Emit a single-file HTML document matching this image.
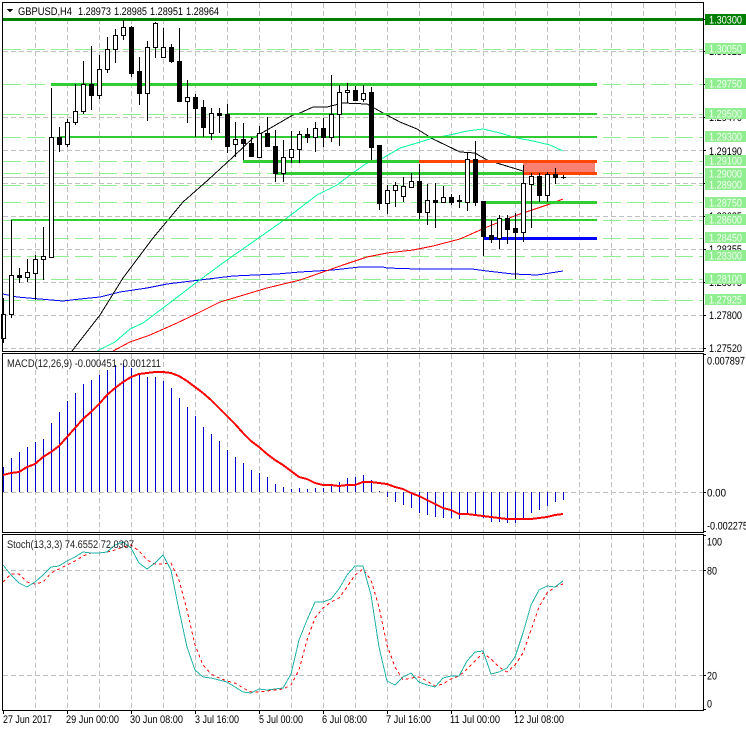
<!DOCTYPE html>
<html><head><meta charset="utf-8"><title>GBPUSD,H4</title>
<style>html,body{margin:0;padding:0;background:#fff;width:746px;height:731px;overflow:hidden}svg{display:block}text{font-family:"Liberation Sans",sans-serif;font-size:11px;fill:#000}</style></head>
<body>
<svg width="746" height="731" viewBox="0 0 746 731" xmlns="http://www.w3.org/2000/svg" shape-rendering="crispEdges">
<rect width="746" height="731" fill="#fff"/>
<!-- grid -->
<g stroke="#c0c0c0" stroke-width="1" stroke-dasharray="5 3" fill="none">
<path d="M35.5 3V351M67.5 3V351M99.5 3V351M131.5 3V351M163.5 3V351M195.5 3V351M227.5 3V351M259.5 3V351M291.5 3V351M323.5 3V351M355.5 3V351M387.5 3V351M419.5 3V351M451.5 3V351M483.5 3V351M515.5 3V351M547.5 3V351M579.5 3V351M611.5 3V351M643.5 3V351M675.5 3V351"/>
<path d="M35.5 354V532M67.5 354V532M99.5 354V532M131.5 354V532M163.5 354V532M195.5 354V532M227.5 354V532M259.5 354V532M291.5 354V532M323.5 354V532M355.5 354V532M387.5 354V532M419.5 354V532M451.5 354V532M483.5 354V532M515.5 354V532M547.5 354V532M579.5 354V532M611.5 354V532M643.5 354V532M675.5 354V532"/>
<path d="M35.5 535V710M67.5 535V710M99.5 535V710M131.5 535V710M163.5 535V710M195.5 535V710M227.5 535V710M259.5 535V710M291.5 535V710M323.5 535V710M355.5 535V710M387.5 535V710M419.5 535V710M451.5 535V710M483.5 535V710M515.5 535V710M547.5 535V710M579.5 535V710M611.5 535V710M643.5 535V710M675.5 535V710"/>
<path d="M3 51.5H703M3 117.5H703M3 150.5H703M3 183.5H703M3 216.5H703M3 249.5H703M3 282.5H703M3 315.5H703M3 348.5H703"/>
<path d="M3 492.5H703M3 570.5H703M3 675.5H703"/>
</g>
<!-- bid line -->
<rect x="3" y="177" width="700" height="1" fill="#c0c0c0"/>
<!-- level dashes -->
<path stroke="#90ee90" stroke-width="1" stroke-dasharray="18 6" fill="none" d="M3 49.5H703M3 84.5H703M3 114.5H703M3 137.5H703M3 161.5H703M3 173.5H703M3 185.5H703M3 202.5H703M3 220.5H703M3 238.5H703M3 256.5H703M3 279.5H703M3 300.5H703"/>
<!-- MAs -->
<g fill="none" stroke-width="1">
<polyline stroke="#0000ff" points="3,294 17,297 40,299 63,301 80,299 100,297 120,292 147,288 167,284 200,280 233,276 277,274 300,272 333,270 360,267 383,267 387,268 417,269 472,269 487,271 513,274 537,275 563,271"/>
<polyline stroke="#ff0000" points="113,351 130,342 150,335 177,323 200,312 220,302 237,297 267,288 300,280 323,272 343,265 367,257 387,253 413,250 433,246 460,239 487,227 517,215 550,204 563,199"/>
<polyline stroke="#00fa9a" points="97,351 115,342 130,329 143,323 167,305 197,282 227,260 260,237 287,218 300,208 317,195 337,185 350,175 367,163 383,158 400,148 417,143 433,138 450,135 467,131 483,129 500,133 517,138 533,141 550,145 563,151"/>
<polyline stroke="#000" points="72,351 100,315 123,278 153,238 183,202 208,180 233,157 253,138 267,130 293,115 300,113 313,107 327,107 343,103 367,104 383,113 400,122 417,129 433,139 460,152 475,153 487,160 513,168 523,171 535,172"/>
</g>
<!-- thick levels -->
<rect x="3" y="18" width="700" height="3" fill="#008000"/>
<g fill="#32cd32">
<rect x="51" y="83" width="546" height="3"/>
<rect x="227" y="113" width="370" height="2"/>
<rect x="59" y="136" width="538" height="2"/>
<rect x="243" y="160" width="176" height="3"/>
<rect x="275" y="172" width="248" height="3"/>
<rect x="483" y="201" width="114" height="3"/>
<rect x="11" y="219" width="586" height="2"/>
</g>
<rect x="483" y="237" width="114" height="3" fill="#0000ff"/>
<rect x="523" y="161" width="72" height="12" fill="#fb8072"/>
<rect x="419" y="160" width="178" height="3" fill="#ff4500"/>
<rect x="523" y="172" width="74" height="3" fill="#ff4500"/>
<!-- wicks -->
<path stroke="#000" stroke-width="1" fill="none" d="M3.5 298V343M11.5 220V318M19.5 268V283M27.5 259V282M35.5 255V300M43.5 227V280M51.5 88V258M59.5 127V152M67.5 119V147M75.5 84V125M83.5 61V114M91.5 46V110M99.5 55V99M107.5 37V73M115.5 29V63M123.5 20V40M131.5 26V77M139.5 57V105M147.5 41V121M155.5 22V58M163.5 28V57M171.5 44V63M179.5 28V102M187.5 80V123M195.5 94V137M203.5 100V137M211.5 108V140M219.5 108V133M227.5 104V153M235.5 122V157M243.5 123V160M251.5 137V156M259.5 126V157M267.5 117V147M275.5 130V182M283.5 140V182M291.5 131V163M299.5 131V163M307.5 128V143M315.5 122V152M323.5 118V147M331.5 75V142M339.5 85V146M347.5 83V103M355.5 86V100M363.5 85V102M371.5 87V160M379.5 145V210M387.5 185V214M395.5 182V207M403.5 177V202M411.5 173V187M419.5 164V219M427.5 184V225M435.5 183V228M443.5 186V203M451.5 194V205M459.5 195V208M467.5 152V211M475.5 141V206M483.5 201V256M491.5 220V243M499.5 215V249M507.5 215V244M515.5 213V279M523.5 165V242M531.5 173V228M539.5 173V202M547.5 172V202M555.5 168V184M563.5 175V179"/>
<!-- black bodies -->
<path fill="#000" d="M17 275h5v3h-5zM89 84h5v12h-5zM57 137h5v8h-5zM129 27h5v47h-5zM137 71h5v23h-5zM169 47h5v15h-5zM177 61h5v41h-5zM193 97h5v12h-5zM201 107h5v21h-5zM217 113h5v3h-5zM225 114h5v33h-5zM241 139h5v5h-5zM249 143h5v14h-5zM265 133h5v14h-5zM273 146h5v28h-5zM305 134h5v4h-5zM321 128h5v10h-5zM353 90h5v11h-5zM369 92h5v56h-5zM377 145h5v59h-5zM417 181h5v32h-5zM433 200h5v3h-5zM449 197h5v6h-5zM457 200h5v2h-5zM473 159h5v44h-5zM481 201h5v36h-5zM489 235h5v5h-5zM505 218h5v12h-5zM513 228h5v5h-5zM537 176h5v20h-5zM553 174h5v4h-5zM561 177h5v1h-5z"/>
<!-- white bodies -->
<g fill="#fff" stroke="#000" stroke-width="1">
<rect x="1.5" y="314.5" width="4" height="24"/><rect x="9.5" y="275.5" width="4" height="39"/><rect x="25.5" y="272.5" width="4" height="5"/><rect x="33.5" y="259.5" width="4" height="14"/><rect x="41.5" y="256.5" width="4" height="3"/><rect x="49.5" y="137.5" width="4" height="120"/><rect x="65.5" y="122.5" width="4" height="22"/><rect x="73.5" y="111.5" width="4" height="11"/><rect x="81.5" y="84.5" width="4" height="27"/><rect x="97.5" y="69.5" width="4" height="26"/><rect x="105.5" y="49.5" width="4" height="20"/><rect x="113.5" y="35.5" width="4" height="14"/><rect x="121.5" y="27.5" width="4" height="8"/><rect x="145.5" y="47.5" width="4" height="46"/><rect x="153.5" y="23.5" width="4" height="24"/><rect x="161.5" y="47.5" width="4" height="10"/><rect x="185.5" y="97.5" width="4" height="4"/><rect x="209.5" y="113.5" width="4" height="20"/><rect x="233.5" y="139.5" width="4" height="5"/><rect x="257.5" y="133.5" width="4" height="24"/><rect x="281.5" y="157.5" width="4" height="16"/><rect x="289.5" y="149.5" width="4" height="8"/><rect x="297.5" y="134.5" width="4" height="15"/><rect x="313.5" y="128.5" width="4" height="9"/><rect x="329.5" y="114.5" width="4" height="23"/><rect x="337.5" y="92.5" width="4" height="22"/><rect x="345.5" y="90.5" width="4" height="2"/><rect x="361.5" y="93.5" width="4" height="6"/><rect x="385.5" y="190.5" width="4" height="13"/><rect x="393.5" y="185.5" width="4" height="5"/><rect x="401.5" y="186.5" width="4" height="10"/><rect x="409.5" y="181.5" width="4" height="6"/><rect x="425.5" y="200.5" width="4" height="12"/><rect x="441.5" y="197.5" width="4" height="5"/><rect x="465.5" y="159.5" width="4" height="43"/><rect x="497.5" y="218.5" width="4" height="20"/><rect x="521.5" y="183.5" width="4" height="49"/><rect x="529.5" y="176.5" width="4" height="8"/><rect x="545.5" y="174.5" width="4" height="21"/>
</g>
<!-- MACD histogram -->
<path stroke="#0000cd" stroke-width="1" fill="none" d="M3.5 492V467M11.5 492V458M19.5 492V452M27.5 492V447M35.5 492V442M43.5 492V439M51.5 492V423M59.5 492V412M67.5 492V401M75.5 492V393M83.5 492V384M91.5 492V380M99.5 492V375M107.5 492V370M115.5 492V365M123.5 492V363M131.5 492V368M139.5 492V375M147.5 492V377M155.5 492V377M163.5 492V381M171.5 492V388M179.5 492V398M187.5 492V407M195.5 492V416M203.5 492V427M211.5 492V434M219.5 492V441M227.5 492V450M235.5 492V457M243.5 492V463M251.5 492V470M259.5 492V473M267.5 492V477M275.5 492V484M283.5 492V487M291.5 492V489M299.5 492V488M307.5 492V489M315.5 492V488M323.5 492V488M331.5 492V486M339.5 492V482M347.5 492V478M355.5 492V477M363.5 492V475M371.5 492V480M379.5 492V491M387.5 492V497M395.5 492V502M403.5 492V505M411.5 492V508M419.5 492V513M427.5 492V515M435.5 492V517M443.5 492V518M451.5 492V518M459.5 492V519M467.5 492V515M475.5 492V514M483.5 492V518M491.5 492V522M499.5 492V522M507.5 492V523M515.5 492V523M523.5 492V520M531.5 492V513M539.5 492V510M547.5 492V506M555.5 492V502M563.5 492V500"/>
<polyline fill="none" stroke="#ff0000" stroke-width="2" points="3,475 11,473 19,472 27,467 35,464 43,457 51,452 59,446 67,437 75,428 83,419 91,412 99,404 107,395 115,388 123,382 131,377 139,374 147,373 155,372 163,372 171,373 179,376 187,381 195,387 203,393 211,400 219,408 227,416 235,424 243,433 251,441 259,447 267,454 275,460 283,465 291,471 299,477 307,479 315,483 323,485 331,485 339,486 347,485 355,485 363,482 371,482 379,483 387,484 395,487 403,489 411,493 419,496 427,500 435,504 443,508 451,510 459,514 467,514 475,515 483,516 491,517 499,518 507,519 515,519 523,519 531,519 539,518 547,517 555,515 563,514"/>
<!-- Stoch -->
<polyline fill="none" stroke="#ff0000" stroke-width="1" stroke-dasharray="3 3" points="3,582 11,574 19,574 27,582 35,584 43,582 51,573 59,569 67,565 75,561 83,556 91,553 99,553 107,552 115,550 123,547 131,545 139,551 147,560 155,564 163,564 171,563 179,580 187,610 195,645 203,665 211,674 219,678 227,681 235,683 243,688 251,692 259,692 267,691 275,690 283,689 291,685 299,670 307,640 315,618 323,608 331,602 339,598 347,587 355,575 363,569 371,580 379,607 387,645 395,667 403,680 411,678 419,677 427,681 435,686 443,684 451,679 459,676 467,669 475,661 483,653 491,659 499,667 507,672 515,665 523,653 531,630 539,607 547,593 555,587 563,584"/>
<polyline fill="none" stroke="#20b2aa" stroke-width="1" points="3,565 11,575 19,583 27,587 35,582 43,575 51,567 59,566 67,561 75,557 83,552 91,553 99,553 107,552 115,545 123,542 131,548 139,563 147,569 155,563 163,555 171,570 179,610 187,647 195,670 203,677 211,678 219,680 227,682 235,687 243,692 251,693 259,689 267,690 275,689 283,688 291,674 299,640 307,620 315,602 323,602 331,599 339,589 347,575 355,566 363,566 371,595 379,647 387,681 395,685 403,677 411,673 419,682 427,685 435,687 443,678 451,676 459,676 467,661 475,652 483,651 491,674 499,672 507,668 515,657 523,633 531,605 539,590 547,586 555,587 563,581"/>
<!-- frames -->
<g fill="none" stroke="#000" stroke-width="1">
<rect x="2.5" y="2.5" width="701" height="349"/>
<rect x="2.5" y="353.5" width="701" height="179"/>
<rect x="2.5" y="534.5" width="701" height="176"/>
<path d="M703 19.5h3M703 51.5h3M703 84.5h3M703 117.5h3M703 150.5h3M703 183.5h3M703 216.5h3M703 249.5h3M703 282.5h3M703 315.5h3M703 348.5h3M703 354.5h3M703 492.5h3M703 531.5h3M703 535.5h3M703 570.5h3M703 675.5h3M703 709.5h3M3.5 711v3M67.5 711v3M131.5 711v3M195.5 711v3M259.5 711v3M323.5 711v3M387.5 711v3M451.5 711v3M515.5 711v3"/>
</g>
<!-- title -->
<rect x="3" y="3" width="220" height="14" fill="#fff"/>
<polygon points="7,9 13,9 10,12.5" fill="#000"/>
<g shape-rendering="auto" text-rendering="geometricPrecision">
<text x="18" y="15" textLength="54" lengthAdjust="spacingAndGlyphs">GBPUSD,H4</text>
<text x="78" y="15" textLength="33" lengthAdjust="spacingAndGlyphs">1.28973</text>
<text x="114" y="15" textLength="33" lengthAdjust="spacingAndGlyphs">1.28985</text>
<text x="150" y="15" textLength="33" lengthAdjust="spacingAndGlyphs">1.28951</text>
<text x="186" y="15" textLength="33" lengthAdjust="spacingAndGlyphs">1.28964</text>
<text x="7" y="367" textLength="154" lengthAdjust="spacingAndGlyphs" style="fill:#222">MACD(12,26,9) -0.000451 -0.001211</text>
<text x="7" y="548" textLength="127" lengthAdjust="spacingAndGlyphs" style="fill:#222">Stoch(13,3,3) 74.6552 72.0307</text>
<!-- axis prices -->
<text x="709" y="55" textLength="33" lengthAdjust="spacingAndGlyphs">1.30025</text>
<text x="709" y="121" textLength="33" lengthAdjust="spacingAndGlyphs">1.29470</text>
<text x="709" y="155" textLength="33" lengthAdjust="spacingAndGlyphs">1.29190</text>
<text x="709" y="220" textLength="33" lengthAdjust="spacingAndGlyphs">1.28635</text>
<text x="709" y="253" textLength="33" lengthAdjust="spacingAndGlyphs">1.28355</text>
<text x="709" y="286" textLength="33" lengthAdjust="spacingAndGlyphs">1.28075</text>
<text x="709" y="319" textLength="33" lengthAdjust="spacingAndGlyphs">1.27800</text>
<text x="709" y="352" textLength="33" lengthAdjust="spacingAndGlyphs">1.27520</text>
<text x="707" y="364.500" textLength="38" lengthAdjust="spacingAndGlyphs">0.007897</text>
<text x="707" y="496.500" textLength="19" lengthAdjust="spacingAndGlyphs">0.00</text>
<text x="707" y="529.500" textLength="41" lengthAdjust="spacingAndGlyphs">-0.002275</text>
<text x="707" y="545.500" textLength="15" lengthAdjust="spacingAndGlyphs">100</text>
<text x="707" y="574.500" textLength="10" lengthAdjust="spacingAndGlyphs">80</text>
<text x="707" y="679.500" textLength="10" lengthAdjust="spacingAndGlyphs">20</text>
<text x="707" y="707.500" textLength="5" lengthAdjust="spacingAndGlyphs">0</text>
<!-- labels -->
<g shape-rendering="crispEdges">
<rect x="705" y="14" width="41" height="11" fill="#008000"/>
<g fill="#90ee90"><rect x="705" y="43" width="41" height="11"/><rect x="705" y="78" width="41" height="11"/><rect x="705" y="108" width="41" height="11"/><rect x="705" y="131" width="41" height="11"/><rect x="705" y="155" width="41" height="11"/><rect x="705" y="168" width="41" height="11"/><rect x="705" y="179" width="41" height="11"/><rect x="705" y="197" width="41" height="11"/><rect x="705" y="214" width="41" height="11"/><rect x="705" y="232" width="41" height="11"/><rect x="705" y="250" width="41" height="11"/><rect x="705" y="273" width="41" height="11"/><rect x="705" y="294" width="41" height="11"/></g>
</g>
<g style="fill:#f2fff2">
<text x="709" y="23.500" textLength="33" lengthAdjust="spacingAndGlyphs" style="fill:#fff">1.30300</text>
<text x="709" y="52.500" textLength="33" lengthAdjust="spacingAndGlyphs" style="fill:#f2fff2">1.30050</text>
<text x="709" y="87.500" textLength="33" lengthAdjust="spacingAndGlyphs" style="fill:#f2fff2">1.29750</text>
<text x="709" y="117.500" textLength="33" lengthAdjust="spacingAndGlyphs" style="fill:#f2fff2">1.29500</text>
<text x="709" y="140.500" textLength="33" lengthAdjust="spacingAndGlyphs" style="fill:#f2fff2">1.29300</text>
<text x="709" y="164.500" textLength="33" lengthAdjust="spacingAndGlyphs" style="fill:#f2fff2">1.29100</text>
<text x="709" y="177.500" textLength="33" lengthAdjust="spacingAndGlyphs" style="fill:#f2fff2">1.29000</text>
<text x="709" y="188.500" textLength="33" lengthAdjust="spacingAndGlyphs" style="fill:#f2fff2">1.28900</text>
<text x="709" y="206.500" textLength="33" lengthAdjust="spacingAndGlyphs" style="fill:#f2fff2">1.28750</text>
<text x="709" y="223.500" textLength="33" lengthAdjust="spacingAndGlyphs" style="fill:#f2fff2">1.28600</text>
<text x="709" y="241.500" textLength="33" lengthAdjust="spacingAndGlyphs" style="fill:#f2fff2">1.28450</text>
<text x="709" y="259.500" textLength="33" lengthAdjust="spacingAndGlyphs" style="fill:#f2fff2">1.28300</text>
<text x="709" y="282.500" textLength="33" lengthAdjust="spacingAndGlyphs" style="fill:#f2fff2">1.28100</text>
<text x="709" y="303.500" textLength="33" lengthAdjust="spacingAndGlyphs" style="fill:#f2fff2">1.27925</text>
</g>
<!-- time -->
<text x="3" y="723" textLength="49" lengthAdjust="spacingAndGlyphs">27 Jun 2017</text>
<text x="66" y="723" textLength="53" lengthAdjust="spacingAndGlyphs">29 Jun 00:00</text>
<text x="130" y="723" textLength="53" lengthAdjust="spacingAndGlyphs">30 Jun 08:00</text>
<text x="195" y="723" textLength="44" lengthAdjust="spacingAndGlyphs">3 Jul 16:00</text>
<text x="259" y="723" textLength="44" lengthAdjust="spacingAndGlyphs">5 Jul 00:00</text>
<text x="322" y="723" textLength="45" lengthAdjust="spacingAndGlyphs">6 Jul 08:00</text>
<text x="386" y="723" textLength="45" lengthAdjust="spacingAndGlyphs">7 Jul 16:00</text>
<text x="450" y="723" textLength="50" lengthAdjust="spacingAndGlyphs">11 Jul 00:00</text>
<text x="514" y="723" textLength="50" lengthAdjust="spacingAndGlyphs">12 Jul 08:00</text>
</g>
</svg>
</body></html>
